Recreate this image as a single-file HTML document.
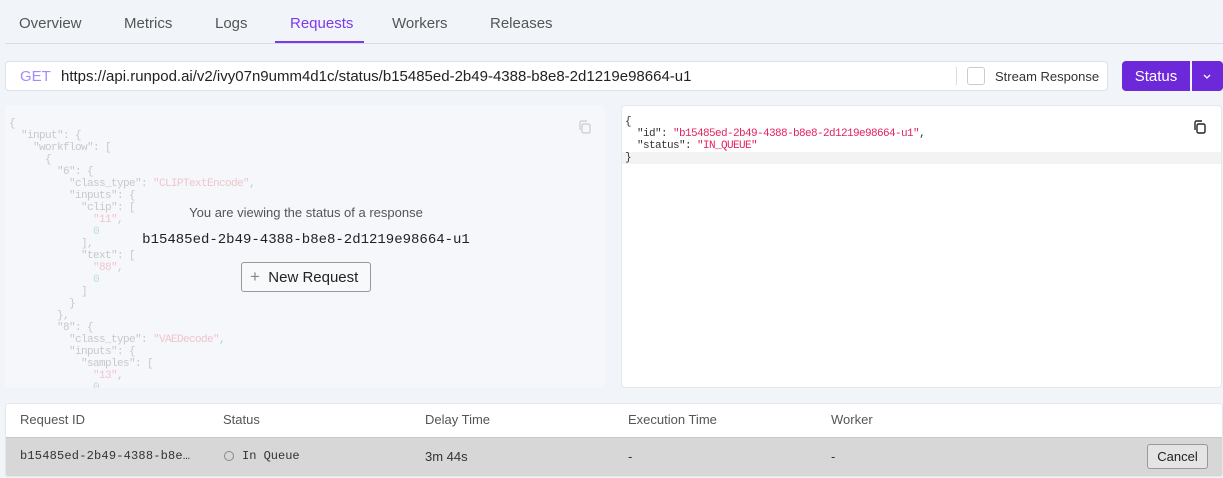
<!DOCTYPE html>
<html><head><style>
*{box-sizing:border-box;margin:0;padding:0}
body{width:1223px;height:478px;background:#f1f4f9;font-family:"Liberation Sans",sans-serif;position:relative;overflow:hidden;color:#333}
.tab{position:absolute;top:15px;font-size:15px;color:#555}
.abs{position:absolute}
pre{font-family:"Liberation Mono",monospace;font-size:11px;line-height:12px;letter-spacing:-0.6px}
.k{color:#c8c8c8}.s{color:#f0c5cf}.n{color:#b8dede}
</style></head><body>
<div class="tab" style="left:19px">Overview</div>
<div class="tab" style="left:124px">Metrics</div>
<div class="tab" style="left:215px">Logs</div>
<div class="tab" style="left:290px;color:#7c3aed">Requests</div>
<div class="tab" style="left:392px">Workers</div>
<div class="tab" style="left:490px">Releases</div>
<div class="abs" style="left:5px;top:43px;width:1218px;height:1px;background:#d8dbe2"></div>
<div class="abs" style="left:275px;top:41px;width:89px;height:2px;background:#7c3aed"></div>

<div class="abs" style="left:5px;top:61px;width:1103px;height:30px;background:#fff;border:1px solid #dfe2e8;border-radius:4px"></div>
<div class="abs" style="left:20px;top:68px;font-size:15px;color:#a78bfa">GET</div>
<div class="abs" style="left:61px;top:68px;font-size:15px;color:#222">https://api.runpod.ai/v2/ivy07n9umm4d1c/status/b15485ed-2b49-4388-b8e8-2d1219e98664-u1</div>
<div class="abs" style="left:956px;top:67px;width:1px;height:18px;background:#ddd"></div>
<div class="abs" style="left:967px;top:67px;width:18px;height:18px;border:1px solid #ccc;border-radius:3px;background:#fff"></div>
<div class="abs" style="left:995px;top:69px;font-size:13px;color:#333">Stream Response</div>
<div class="abs" style="left:1122px;top:61px;width:68px;height:30px;background:#6d28d9;border-radius:4px 0 0 4px;color:#fff;font-size:15px;text-align:center;line-height:31px">Status</div>
<div class="abs" style="left:1192px;top:61px;width:31px;height:30px;background:#6d28d9;border-radius:0 4px 4px 0"></div>
<svg class="abs" style="left:1202px;top:71px" width="10" height="10" viewBox="0 0 10 10" fill="none" stroke="#fff" stroke-width="1.3"><path d="M2 4l3 3 3-3"/></svg>

<div class="abs" style="left:5px;top:105px;width:600px;height:283px;background:#f5f7fa;border-radius:4px;overflow:hidden">
<pre style="position:absolute;left:4px;top:13px"><span class="k">{
  "input": {
    "workflow": [
      {
        "6": {
          "class_type": <span class="s">"CLIPTextEncode"</span>,
          "inputs": {
            "clip": [
              <span class="s">"11"</span>,
              <span class="n">0</span>
            ],
            "text": [
              <span class="s">"88"</span>,
              <span class="n">0</span>
            ]
          }
        },
        "8": {
          "class_type": <span class="s">"VAEDecode"</span>,
          "inputs": {
            "samples": [
              <span class="s">"13"</span>,
              <span class="n">0</span></span></pre>
<svg class="abs" style="left:572px;top:14px" width="16" height="16" viewBox="0 0 16 16" fill="none" stroke="#ccc" stroke-width="1.2"><rect x="5" y="5" width="8" height="9" rx="1.5"/><path d="M3 11V3.5A1.5 1.5 0 0 1 4.5 2H10"/></svg>
</div>
<div class="abs" style="left:0;top:205px;width:612px;text-align:center;font-size:13px;color:#555">You are viewing the status of a response</div>
<div class="abs" style="left:0;top:232px;width:612px;text-align:center;font-family:'Liberation Mono',monospace;font-size:14px;color:#222">b15485ed-2b49-4388-b8e8-2d1219e98664-u1</div>
<div class="abs" style="left:241px;top:262px;width:130px;height:30px;border:1px solid #999;border-radius:3px;background:#f8f9fb;font-size:15px;color:#222;line-height:28px;padding-left:8px"><span style="color:#888;font-size:17px">+</span>&nbsp; New Request</div>

<div class="abs" style="left:621px;top:105px;width:601px;height:283px;background:#fff;border:1px solid #e6e8ec;border-radius:4px;overflow:hidden">
<div class="abs" style="left:0;top:46px;width:601px;height:12px;background:#f3f3f3"></div>
<pre style="position:absolute;left:3px;top:10px;color:#333">{
  "id": <span style="color:#e0245e">"b15485ed-2b49-4388-b8e8-2d1219e98664-u1"</span>,
  "status": <span style="color:#e0245e">"IN_QUEUE"</span>
}</pre>
<svg class="abs" style="left:570px;top:13px" width="16" height="16" viewBox="0 0 16 16" fill="none" stroke="#222" stroke-width="1.4"><rect x="5" y="5" width="8" height="9" rx="1.5"/><path d="M3 11V3.5A1.5 1.5 0 0 1 4.5 2H10"/></svg>
</div>

<div class="abs" style="left:5px;top:403px;width:1218px;height:74px;background:#fff;border:1px solid #e4e6ea;border-radius:3px;overflow:hidden">
<div class="abs" style="left:0;top:33px;width:1218px;height:41px;background:#d7d7d7;border-top:1px solid #c8c8c8"></div>
</div>
<div class="abs" style="left:20px;top:412px;font-size:13px;color:#555">Request ID</div>
<div class="abs" style="left:223px;top:412px;font-size:13px;color:#555">Status</div>
<div class="abs" style="left:425px;top:412px;font-size:13px;color:#555">Delay Time</div>
<div class="abs" style="left:628px;top:412px;font-size:13px;color:#555">Execution Time</div>
<div class="abs" style="left:831px;top:412px;font-size:13px;color:#555">Worker</div>
<div class="abs" style="left:20px;top:449px;font-family:'Liberation Mono',monospace;font-size:12px;color:#333;letter-spacing:0.2px">b15485ed-2b49-4388-b8e…</div>
<div class="abs" style="left:224px;top:451px;width:10px;height:10px;border:1px solid #888;border-radius:50%"></div>
<div class="abs" style="left:242px;top:449px;font-family:'Liberation Mono',monospace;font-size:12px;color:#333">In Queue</div>
<div class="abs" style="left:425px;top:449px;font-size:13px;color:#333">3m 44s</div>
<div class="abs" style="left:628px;top:449px;font-size:13px;color:#333">-</div>
<div class="abs" style="left:831px;top:449px;font-size:13px;color:#333">-</div>
<div class="abs" style="left:1147px;top:444px;width:61px;height:25px;border:1px solid #999;border-radius:3px;background:#e4e4e4;font-size:13px;color:#222;text-align:center;line-height:23px">Cancel</div>
</body></html>
